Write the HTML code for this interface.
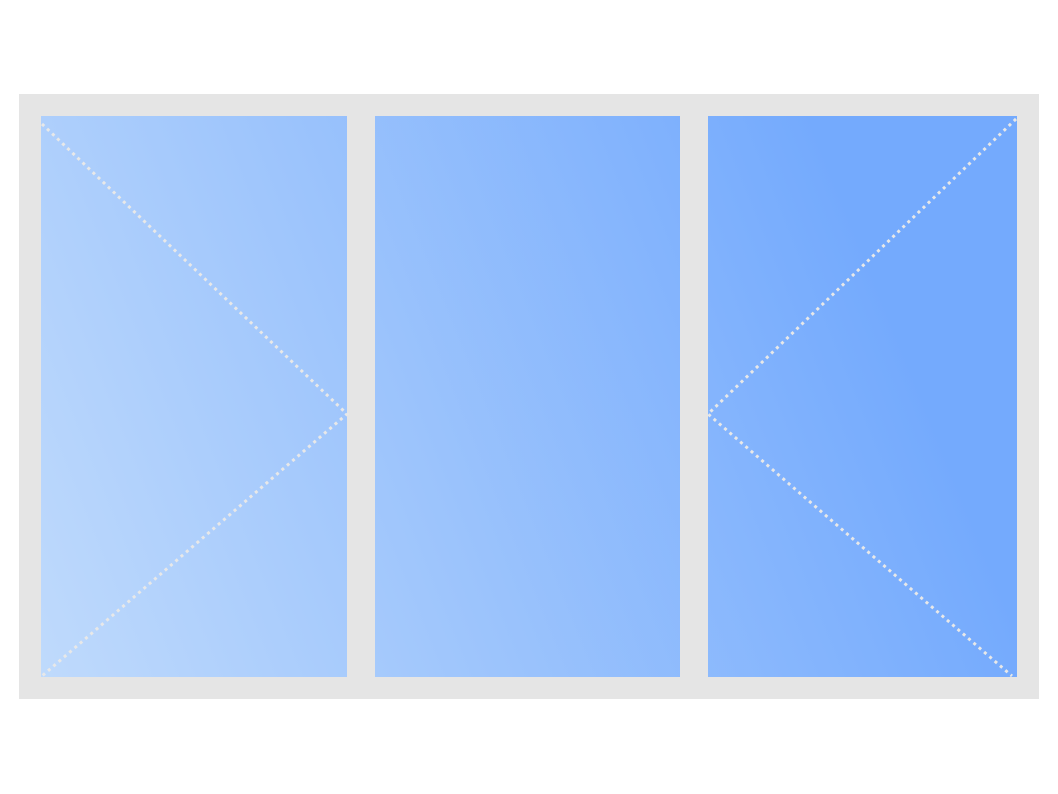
<!DOCTYPE html>
<html><head><style>html,body{margin:0;padding:0;background:#fff;width:1058px;height:794px;overflow:hidden}</style></head>
<body>
<svg width="1058" height="794" viewBox="0 0 1058 794" xmlns="http://www.w3.org/2000/svg">
<defs>
<linearGradient id="g" gradientUnits="userSpaceOnUse" x1="41" y1="677" x2="900" y2="330">
<stop offset="0" stop-color="#bfdafc"/>
<stop offset="1" stop-color="#74aafd"/>
</linearGradient>
</defs>
<rect x="19" y="94" width="1020" height="605" fill="#e5e5e5"/>
<rect x="41" y="116" width="306" height="561" fill="url(#g)"/>
<rect x="375" y="116" width="305" height="561" fill="url(#g)"/>
<rect x="708" y="116" width="309" height="561" fill="url(#g)"/>
<g stroke="#e8e8e8" stroke-width="3" stroke-dasharray="3 4" fill="none">
<path d="M42 124 L347 414 L42 676"/>
<path d="M1016 119 L708 414 L1012 676"/>
</g>
</svg>
</body></html>
